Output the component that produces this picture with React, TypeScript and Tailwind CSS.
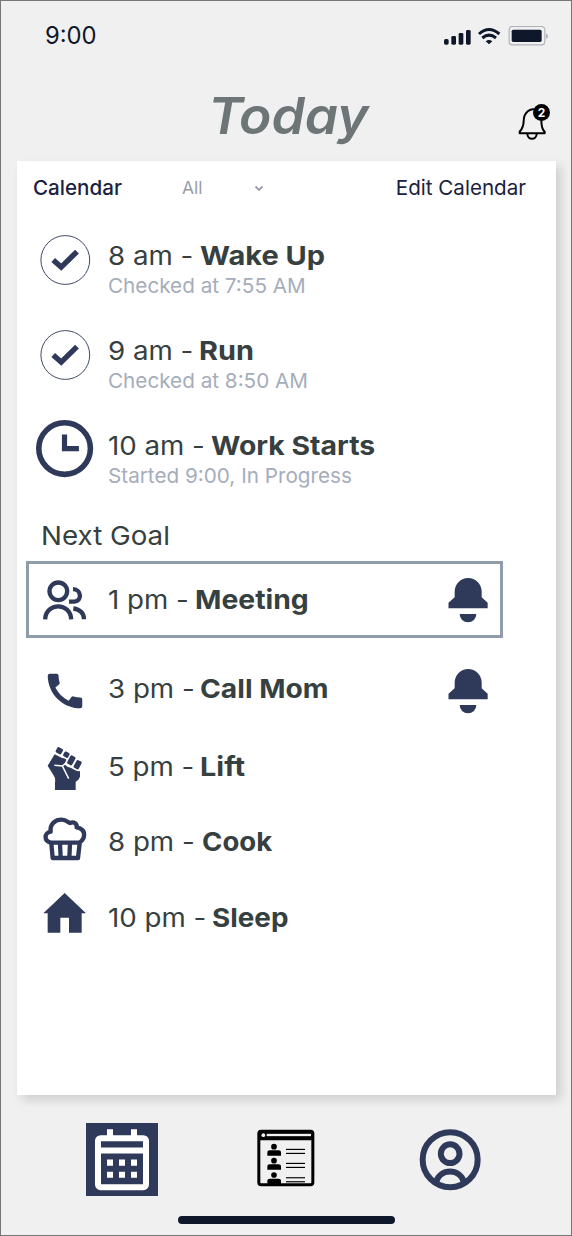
import React from 'react';
import clsx from 'clsx';
import { MdCall } from 'react-icons/md';

const NAVY = '#2f3a5a';

const CheckIcon: React.FC = () => (
  <svg width="52" height="52" viewBox="0 0 52 52" fill="none" className="mt-[2px] shrink-0">
    <circle cx="26.300" cy="26" r="24.4" stroke="#3f4b63" strokeWidth="1" />
    <path d="M14.2 25.9l8 7.2L38 17.6" stroke={NAVY} strokeWidth="5.4" />
  </svg>
);

const ClockIcon: React.FC = () => (
  <svg width="58" height="58" viewBox="0 0 58 58" fill="none" className="shrink-0">
    <circle cx="28.600" cy="28.600" r="25.8" stroke={NAVY} strokeWidth="5.6" />
    <path d="M28.500 14.500v14.200h14.400" stroke={NAVY} strokeWidth="5.2" />
  </svg>
);

const PeopleIcon: React.FC = () => (
  <svg width="44" height="40" viewBox="69 89 132 120" fill="none" className="shrink-0">
    <g stroke={NAVY} strokeWidth="13">
      <circle cx="115" cy="123" r="26.5" />
      <path d="M75.500 207C77 155 152 155 153.500 207" />
      <path d="M159 116.500C186 117 186 154 163 154H147" />
      <path d="M160 174.500C181 177 192 190 192 207" />
    </g>
  </svg>
);

const FistIcon: React.FC = () => (
  <svg width="36" height="45" viewBox="81 46 108 135" className="shrink-0">
    <g fill={NAVY}>
      <rect x="-9.500" y="-9" width="19" height="18" rx="4" transform="translate(118 60) rotate(28)" />
      <rect x="-8.500" y="-8" width="17" height="16" rx="4" transform="translate(139 72) rotate(28)" />
      <rect x="-8.500" y="-14" width="17" height="28" rx="4" transform="translate(154 89) rotate(28)" />
      <rect x="-8.500" y="-13" width="17" height="26" rx="4" transform="translate(173 102) rotate(28)" />
      <path d="M104 71L126 82Q138 84 139 88L133 101Q141 110 152 111L166 119Q174 123 180 121L180 138Q177 148 167 153V178H105V155Q107 143 102 136L83 105Z" />
    </g>
    <path d="M103 104L127 106L146 144M127 106L137 98" stroke="#fff" strokeWidth="4.500" fill="none" />
  </svg>
);

const CupcakeIcon: React.FC = () => (
  <svg width="44" height="44" viewBox="68 259 132 132" fill="none" className="shrink-0">
    <g stroke={NAVY} strokeWidth="13" strokeLinejoin="round">
      <path d="M92 336C70 332 71 306 91 303C88 278 106 267 124 267C138 267 144 276 149 277C161 271 171 280 169 290C185 292 193 303 191 315C191 325 184 331 177 336Z" />
      <path d="M93 338L97 382H173L178 338" />
      <path d="M119 338L121 382M149 338L147 382" />
    </g>
  </svg>
);

const HomeIcon: React.FC = () => (
  <svg width="44" height="41" viewBox="69 489 132 123" className="shrink-0">
    <path d="M134 489L198 550H185V608H147V563H121V608H83V550H70Z" fill={NAVY} />
  </svg>
);

const BellIcon: React.FC = () => (
  <svg width="40" height="46" viewBox="54 81 120 138" fill={NAVY} className="shrink-0">
    <path d="M55.500 175V158L74 142V125a40.500 41 0 0 1 81 0V142L173 158V175Z" />
    <path d="M89 192H139a25 25 0 0 1-50 0Z" />
  </svg>
);

const StatusIcons: React.FC = () => (
  <svg width="106" height="24" viewBox="40 42 318 72" fill="none">
    <g fill="#0f172a">
      <rect x="43" y="87" width="14" height="17" rx="5" />
      <rect x="65" y="78" width="14" height="26" rx="4" />
      <rect x="87" y="69" width="14" height="35" rx="4" />
      <rect x="109" y="60" width="14" height="44" rx="4" />
      <path d="M168 94Q178 86 188 94L178 103Z" />
      <rect x="246" y="59" width="90" height="37" rx="5" />
    </g>
    <g stroke="#0f172a" strokeWidth="9">
      <path d="M148 72Q178 45 209 72" />
      <path d="M158 84Q178 67 199 84" />
    </g>
    <rect x="238.500" y="49.500" width="107" height="55" rx="10" stroke="#aeb1b8" strokeWidth="3.500" />
    <path d="M349 71Q355 73 355 78.500Q355 84 349 86Z" fill="#aeb1b8" />
  </svg>
);

const NotificationBell: React.FC = () => (
  <div className="relative h-[37px] w-8">
    <svg width="32" height="37" viewBox="265 280 96 111" fill="none">
      <g stroke="#000" strokeWidth="6" strokeLinejoin="round">
        <path d="M318 300C302 295 283 307 282 333C282 353 274 361 270 366V371H345V366C339 361 335 350 335 330" />
        <path d="M293 372C293 392 321 392 321 372" />
      </g>
    </svg>
    <span className="absolute top-[1px] right-0 flex size-[17px] items-center justify-center rounded-full bg-black text-[12px] leading-none font-bold text-white">
      2
    </span>
  </div>
);

const CalendarTabIcon: React.FC = () => (
  <svg width="72" height="73" viewBox="48 128.500 216 219" fill="none">
    <rect x="48" y="128" width="216" height="220" fill={NAVY} />
    <rect x="84" y="174" width="144" height="147" rx="8" stroke="#fff" strokeWidth="18" />
    <g fill="#fff">
      <rect x="84" y="202" width="144" height="18" />
      <path d="M111 147h18v22h-18zM183 147h18v22h-18z" />
      <path d="M111 238h18v19h-18zM147 238h18v19h-18zM183 238h18v19h-18z" />
      <path d="M111 275h18v18h-18zM147 275h18v18h-18zM183 275h18v18h-18z" />
    </g>
  </svg>
);

const DirectoryTabIcon: React.FC = () => (
  <svg width="58" height="58" viewBox="561 149 174 174" fill="none">
    <rect x="566.500" y="155.500" width="162" height="161" rx="7" stroke="#000" strokeWidth="9" />
    <path d="M566 156H729V183H566Z" fill="#000" />
    <circle cx="580" cy="167.500" r="5.500" fill="#f0f0f0" />
    <rect x="590" y="163.500" width="133" height="7" fill="#f0f0f0" />
    {[202, 244, 287].map((y) => (
      <g key={y} fill="#000">
        <circle cx="612" cy={y} r="8.500" />
        <path d={`M592 ${y + 27}v-9q0-7 8-7h25q8 0 8 7v9z`} />
        <rect x="648" y={y + 6.5} width="57" height="3.500" />
        <rect x="648" y={y + 18.5} width="57" height="3.500" />
      </g>
    ))}
  </svg>
);

const ProfileTabIcon: React.FC = () => (
  <svg width="62" height="62" viewBox="268 145 186 186" fill="none">
    <g stroke={NAVY} strokeWidth="18">
      <circle cx="361.500" cy="237" r="82.500" />
      <circle cx="361.500" cy="219" r="28" />
      <path d="M319 305C331 262 391 262 403 305" />
    </g>
  </svg>
);

interface GoalProps {
  icon: React.ReactNode;
  time: string;
  name: string;
  timeClass: string;
  nameClass: string;
  className?: string;
  titleClass?: string;
  note?: string;
  bell?: boolean;
}

const pastGoals: GoalProps[] = [
  {
    icon: <CheckIcon />,
    time: '8 am -',
    name: 'Wake Up',
    note: 'Checked at 7:55 AM',
    timeClass: 'w-[92px]',
    nameClass: 'scale-x-[1.115]',
  },
  {
    icon: <CheckIcon />,
    time: '9 am -',
    name: 'Run',
    note: 'Checked at 8:50 AM',
    timeClass: 'w-[91px]',
    nameClass: 'scale-x-[1.11]',
  },
  {
    icon: <ClockIcon />,
    time: '10 am -',
    name: 'Work Starts',
    note: 'Started 9:00, In Progress',
    timeClass: 'w-[103px]',
    nameClass: 'scale-x-[1.09]',
  },
];

const upcomingGoals: GoalProps[] = [
  {
    icon: <PeopleIcon />,
    time: '1 pm -',
    name: 'Meeting',
    timeClass: 'w-[87px]',
    nameClass: 'scale-x-[1.09]',
    className: 'ml-[9px] h-[77px] w-[477px] border-[3px] border-[#919cab] pl-2.5',
    bell: true,
  },
  {
    icon: <MdCall size={46} color={NAVY} className="mb-px shrink-0" />,
    time: '3 pm -',
    name: 'Call Mom',
    timeClass: 'w-[92px]',
    nameClass: 'scale-x-[1.085]',
    className: 'mt-[23px] h-[60px] w-[486px] pr-[3px] pl-[22px]',
    titleClass: 'pb-[4px]',
    bell: true,
  },
  {
    icon: <FistIcon />,
    time: '5 pm -',
    name: 'Lift',
    timeClass: 'w-[92px]',
    nameClass: 'scale-x-[1.11]',
    className: 'mt-[17px] h-[60px] pl-[22px]',
    titleClass: 'pb-[2px]',
  },
  {
    icon: <CupcakeIcon />,
    time: '8 pm -',
    name: 'Cook',
    timeClass: 'w-[94px]',
    nameClass: 'scale-x-[1.06]',
    className: 'mt-[11px] h-[60px] pl-[22px]',
    titleClass: 'pt-[5px]',
  },
  {
    icon: <HomeIcon />,
    time: '10 pm -',
    name: 'Sleep',
    timeClass: 'w-[104px]',
    nameClass: 'scale-x-[1.07]',
    className: 'mt-[14px] h-[60px] pl-[22px]',
    titleClass: 'pt-[9px]',
  },
];

const GoalTitle: React.FC<
  Pick<GoalProps, 'time' | 'name' | 'timeClass' | 'nameClass' | 'titleClass'>
> = ({ time, name, timeClass, nameClass, titleClass }) => (
  <h3 className={clsx('flex text-[26px] leading-8 whitespace-nowrap text-[#374040]', titleClass)}>
    <span className={clsx('shrink-0', timeClass)}>
      <span className="inline-block origin-left scale-x-[1.065]">{time}</span>
    </span>
    <span className={clsx('origin-left font-bold', nameClass)}>{name}</span>
  </h3>
);

const PastGoal: React.FC<GoalProps> = ({ icon, note, ...title }) => (
  <li className="flex h-[95px] pl-[22px]">
    <div className="mr-[17px] flex h-[92px] w-[52px] items-center justify-center">{icon}</div>
    <div className="pt-[27px]">
      <GoalTitle {...title} />
      <p className="text-[20.7px] leading-7 text-[#a5adbb]">{note}</p>
    </div>
  </li>
);

const UpcomingGoal: React.FC<GoalProps> = ({ icon, className, bell, ...title }) => (
  <li className={clsx('flex items-center', className)}>
    <div className="mr-[17px] flex w-[52px] items-center justify-center">{icon}</div>
    <GoalTitle {...title} />
    {bell && (
      <div className="mr-3 ml-auto">
        <BellIcon />
      </div>
    )}
  </li>
);

export default function App() {
  return (
    <div className="flex h-[1236px] w-[572px] flex-col overflow-hidden border border-[#777] bg-[#f0f0f0] font-['Inter',sans-serif]">
      <header className="h-[160px] shrink-0">
        <div className="flex h-[70px] items-center justify-between pr-[22px] pl-11">
          <span className="text-[23.8px] text-[#0f172a]">9:00</span>
          <StatusIcons />
        </div>
        <div className="grid grid-cols-[1fr_auto_1fr] items-center pr-[21px] pl-[19px]">
          <h1 className="col-start-2 origin-left scale-x-[1.045] text-[51px] leading-[90px] font-semibold text-[#6e7577] italic">
            Today
          </h1>
          <div className="justify-self-end pt-[11px]">
            <NotificationBell />
          </div>
        </div>
      </header>

      <main className="ml-4 h-[934px] w-[539px] shrink-0 bg-white shadow-[5px_5px_10px_rgba(0,0,0,0.14)]">
        <div className="flex h-[52px] items-center pt-[3px] pr-[30px] pl-4 text-[20.6px] text-[#1b2140]">
          <h2 className="w-[149px] font-medium">Calendar</h2>
          <div className="flex w-[82px] items-center justify-between text-[17.5px] text-[#9a9da8]">
            All
            <svg width="10" height="7" viewBox="0 0 10 7" fill="none">
              <path d="M1.500 1.500L5 5L8.500 1.500" stroke="currentColor" strokeWidth="1.800" />
            </svg>
          </div>
          <button className="ml-auto">Edit Calendar</button>
        </div>

        <ul>
          {pastGoals.map((goal) => (
            <PastGoal key={goal.name} {...goal} />
          ))}
        </ul>

        <h2 className="flex h-[63px] origin-left items-center pt-3 pl-6 text-[26px] text-[#374040]">
          <span className="origin-left scale-x-[1.067]">Next Goal</span>
        </h2>

        <ul>
          {upcomingGoals.map((goal) => (
            <UpcomingGoal key={goal.name} {...goal} />
          ))}
        </ul>
      </main>

      <nav className="mt-[28px] flex h-[73px] shrink-0 items-center pl-[85px]">
        <CalendarTabIcon />
        <div className="mb-[3px] ml-[99px]">
          <DirectoryTabIcon />
        </div>
        <div className="ml-[104px]">
          <ProfileTabIcon />
        </div>
      </nav>
      <div className="mt-5 ml-[177px] h-2 w-[217px] shrink-0 rounded-full bg-[#0f172a]" />
    </div>
  );
}
